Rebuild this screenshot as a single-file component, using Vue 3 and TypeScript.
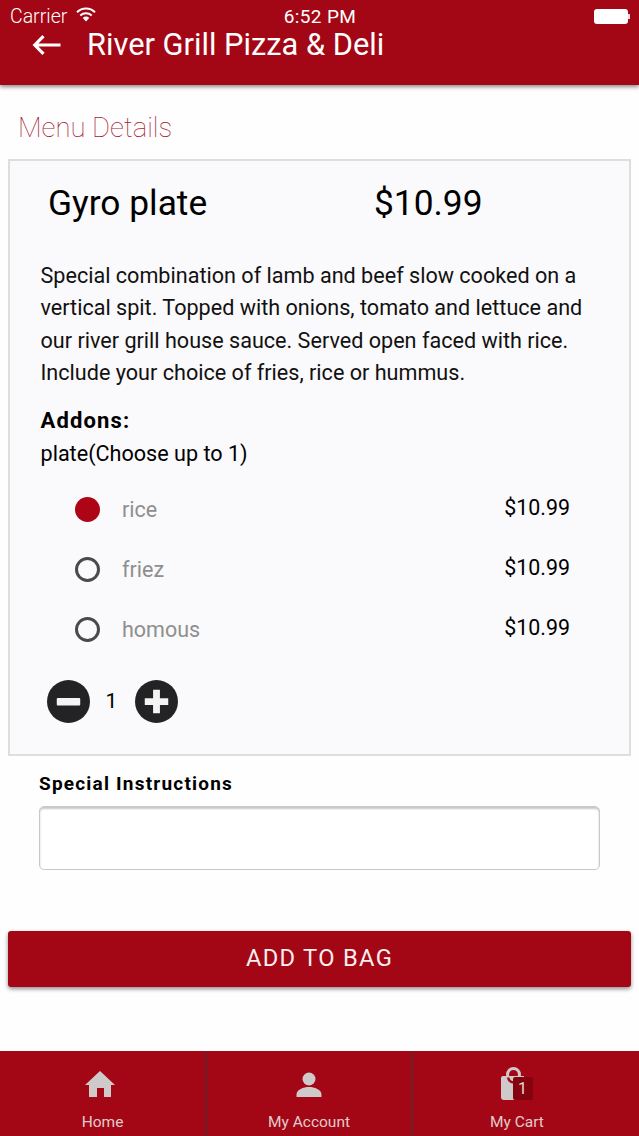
<script setup lang="ts">
const addons = [
  { name: 'rice', price: '$10.99', on: true },
  { name: 'friez', price: '$10.99', on: false },
  { name: 'homous', price: '$10.99', on: false },
]
</script>

<template>
  <div class="page">
    <header class="header">
      <div class="status">
        <div class="status-left">
          <span>Carrier</span>
          <svg class="wifi" viewBox="0 0 20 15" width="20" height="15">
            <path d="M1 5.2a13 13 0 0 1 18 0" fill="none" stroke="#fff" stroke-width="2"/>
            <path d="M4.3 8.4a8.4 8.4 0 0 1 11.4 0" fill="none" stroke="#fff" stroke-width="2"/>
            <path d="M6.8 10.9a4.6 4.6 0 0 1 6.4 0L10 14.4z" fill="#fff"/>
          </svg>
        </div>
        <div class="status-time">6:52 PM</div>
        <div class="status-right">
          <span class="battery"></span><span class="battery-tip"></span>
        </div>
      </div>
      <div class="titlebar">
        <svg class="back" viewBox="0 0 30 22" width="30" height="22">
          <path d="M28.5 11H3M11.5 2.2 2.8 11l8.7 8.8" fill="none" stroke="#fff" stroke-width="3.2"/>
        </svg>
        <h1 class="title">River Grill Pizza &amp; Deli</h1>
      </div>
    </header>

    <h2 class="section">Menu Details</h2>

    <section class="card">
      <div class="item-head">
        <span class="item-name">Gyro plate</span>
        <span class="item-price">$10.99</span>
      </div>
      <p class="desc">Special combination of lamb and beef slow cooked on a vertical spit. Topped with onions, tomato and lettuce and our river grill house sauce. Served open faced with rice. Include your choice of fries, rice or hummus.</p>
      <div class="addons-label">Addons:</div>
      <div class="addons-sub">plate(Choose up to 1)</div>
      <ul class="addons">
        <li v-for="a in addons" :key="a.name" class="addon">
          <span class="radio" :class="{ on: a.on }"></span>
          <span class="addon-name">{{ a.name }}</span>
          <span class="addon-price">{{ a.price }}</span>
        </li>
      </ul>
      <div class="qty">
        <svg viewBox="0 0 44 44" width="43" height="43">
          <circle cx="22" cy="22" r="22" fill="#232326"/>
          <rect x="10" y="18.5" width="24" height="7.5" rx="1" fill="#f4f4f4"/>
        </svg>
        <span class="qty-num">1</span>
        <svg viewBox="0 0 44 44" width="43" height="43">
          <circle cx="22" cy="22" r="22" fill="#232326"/>
          <path d="M18.5 10h7v8.700H34v7h-8.500V34h-7v-8.300H10v-7h8.500z" fill="#f4f4f4"/>
        </svg>
      </div>
    </section>

    <label class="instr-label">Special Instructions</label>
    <div class="instr-box"></div>

    <button class="add">ADD TO BAG</button>

    <nav class="nav">
      <div class="tab">
        <svg class="ico" viewBox="0 0 32 32" width="32" height="32">
          <path d="M16 3 31 17h-4v12h-7v-9h-7v9H5V17H1z" fill="#cfc9ca"/>
        </svg>
        <span class="tab-label">Home</span>
      </div>
      <div class="tab">
        <svg class="ico ico-account" viewBox="0 0 32 32" width="32" height="32">
          <circle cx="16" cy="11" r="6.500" fill="#cfc9ca"/>
          <path d="M3.500 29v-2.500c0-5 7-7.500 12.500-7.500s12.500 2.500 12.500 7.500V29z" fill="#cfc9ca"/>
        </svg>
        <span class="tab-label">My Account</span>
      </div>
      <div class="tab tab-cart">
        <span class="cart-ico">
          <svg viewBox="0 0 32 36" width="32" height="36">
            <path d="M3 9h21v24H4a3 3 0 0 1-3-3V11a2 2 0 0 1 2-2z" fill="#cfc9ca"/>
            <circle cx="13.500" cy="7.500" r="6" fill="none" stroke="#cfc9ca" stroke-width="3"/>
            <path d="M8 10.500a6.500 6.500 0 0 0 6 5" fill="none" stroke="#a30716" stroke-width="2.500"/>
          </svg>
          <span class="badge">1</span>
        </span>
        <span class="tab-label">My Cart</span>
      </div>
    </nav>
  </div>
</template>

<style scoped>
.page {
  width: 639px;
  height: 1136px;
  overflow: hidden;
  display: flex;
  flex-direction: column;
  background: #fefefe;
  font-family: Roboto, "Liberation Sans", sans-serif;
  color: #000;
  box-sizing: border-box;
}
.header {
  height: 85px;
  flex: none;
  background: #a30716;
  color: #fff;
  box-shadow: 0 2px 4px rgba(0, 0, 0, 0.45);
  position: relative;
}
.status {
  height: 31px;
  display: grid;
  grid-template-columns: 1fr auto 1fr;
  align-items: center;
  padding: 1px 9px 0 10px;
  box-sizing: border-box;
  font-size: 19.500px;
}
.status-left { display: flex; align-items: center; gap: 9px; font-weight: 300; }
.wifi { margin-top: -3px; }
.status-time { font-size: 19px; letter-spacing: 0.4px; }
.status-right { display: flex; align-items: center; justify-content: flex-end; }
.battery { width: 34px; height: 15px; background: #fff; border-radius: 3px; }
.battery-tip { width: 2px; height: 5px; background: #f3d8da; }
.titlebar { display: flex; align-items: center; padding-left: 32px; margin-top: -4px; }
.back { flex: none; }
.title { margin: 0 0 0 25px; font-size: 30.800px; font-weight: 400; line-height: 36px; }
.section {
  margin: 27px 0 0 18px;
  font-size: 27.500px;
  line-height: 32px;
  font-weight: 100;
  color: #a31a34;
}
.card {
  margin: 15px 8px 0;
  height: 597px;
  flex: none;
  box-sizing: border-box;
  background: #faf9fb;
  border: 2px solid #dedede;
  padding: 0 30px 0 31px;
}
.item-head { display: flex; height: 80px; align-items: center; font-size: 35.300px; padding-top: 4px; box-sizing: border-box; }
.item-name { margin-left: 7px; width: 326px; }
.desc { margin: 18.500px 0 0 -0.500px; font-size: 21.600px; line-height: 32.500px; color: #111; width: 560px; }
.addons-label { margin: 15.500px 0 0 -0.500px; font-size: 22px; font-weight: 700; line-height: 32px; letter-spacing: 1.150px; }
.addons-sub { font-size: 21.600px; line-height: 34px; margin-left: -0.500px; }
.addons { list-style: none; margin: 8px 0 0; padding: 0; }
.addon { height: 60px; display: flex; align-items: center; padding-left: 34px; }
.radio { width: 25px; height: 25px; border-radius: 50%; border: 3px solid #4a4a4e; box-sizing: border-box; flex: none; }
.radio.on { border: 0; background: #ad0515; }
.addon-name { margin-left: 22px; font-size: 21.500px; color: #8f8f8f; flex: 1; }
.addon-price { font-size: 21.400px; margin: -4px 29px 0 0; }
.qty { display: flex; align-items: center; margin: 21px 0 0 6px; }
.qty-num { width: 45px; padding-right: 2px; box-sizing: border-box; text-align: center; font-size: 21px; margin-top: -2px; }
.instr-label { margin: 16px 0 0 39px; font-size: 19px; line-height: 24px; font-weight: 700; letter-spacing: 1.200px; }
.instr-box {
  margin: 10px 39px 0;
  height: 64px;
  flex: none;
  box-sizing: border-box;
  background: #fff;
  border: 1.500px solid #c8c8c8;
  border-radius: 5px;
  box-shadow: inset 0 2px 2px rgba(0, 0, 0, 0.22);
}
.add {
  margin: 61px 8px 0;
  height: 56px;
  flex: none;
  border: 0;
  border-radius: 3px;
  background: #a30716;
  color: #fbeeee;
  font-family: inherit;
  font-size: 23.700px;
  letter-spacing: 1.300px;
  padding-bottom: 3px;
  box-shadow: 0 2px 4px rgba(0, 0, 0, 0.45);
}
.nav {
  margin-top: auto;
  height: 85px;
  flex: none;
  display: grid;
  grid-template-columns: 207px 206px 1fr;
  background: #a30716;
}
.tab {
  position: relative;
  display: flex;
  flex-direction: column;
  align-items: center;
  border-right: 2px solid #6b2128;
  box-sizing: border-box;
}
.tab:last-child { border-right: 0; }
.tab-cart { padding-right: 21px; }
.ico { margin-top: 17px; margin-left: -5px; }
.ico-account { margin-left: -1px; }
.tab-label { position: absolute; top: 61px; font-size: 15.500px; line-height: 20px; color: #e2cccd; }
.tab-cart .tab-label { left: 77px; }
.cart-ico { position: relative; display: block; margin-top: 16px; height: 36px; }
.badge {
  position: absolute;
  left: 13px;
  top: 10px;
  width: 20px;
  height: 23px;
  border-radius: 2px;
  background: #85030f;
  color: #e8d6d7;
  font-size: 16px;
  line-height: 23px;
  text-align: center;
}
</style>
